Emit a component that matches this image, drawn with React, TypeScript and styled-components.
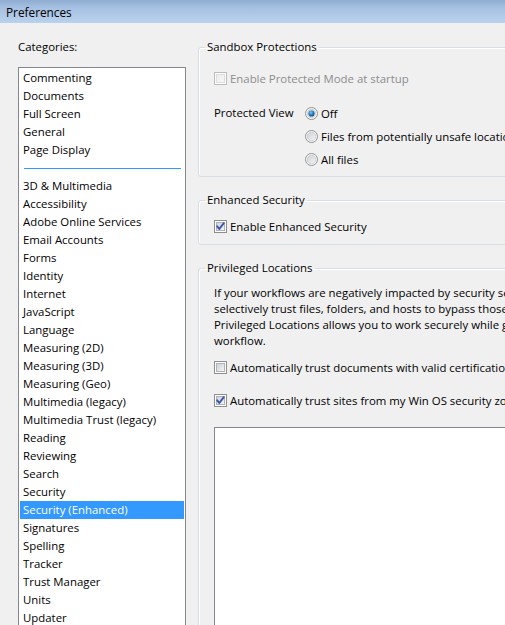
import React from "react";
import styled, {createGlobalStyle} from "styled-components";

const GlobalStyle = createGlobalStyle`
    html, body {
        margin: 0;
        padding: 0;
        background: #f0f0f0;
    }
    body {
        font-family: "Segoe UI", "Open Sans", "Noto Sans", sans-serif;
        font-size: 11.4px;
        color: #000;
    }
`;

const Window = styled.div`
    width: 505px;
    height: 625px;
    overflow: hidden;
    display: flex;
    flex-direction: column;
    background: #f0f0f0;
`;

const TitleBar = styled.div`
    flex: none;
    height: 23px;
    display: flex;
    align-items: center;
    padding-left: 6px;
    font-size: 11.8px;
    background: linear-gradient(to bottom, #8fadd2 0%, #a6c1e2 35%, #b9d2ed 100%);
`;

const Body = styled.div`
    flex: 1;
    min-height: 0;
    display: flex;
    padding: 16px 0 0 18px;
    overflow: hidden;
`;

const LeftColumn = styled.div`
    flex: none;
    width: 168px;
    display: flex;
    flex-direction: column;
    gap: 12px;
`;

const Label = styled.div`
    line-height: 16px;
    height: 16px;
`;

const ListBox = styled.div`
    flex: 1;
    border: 1px solid #828790;
    padding: 1px;
    background: #fff;
`;

const ListItem = styled.div<{ $selected?: boolean }>`
    height: 18px;
    line-height: 18px;
    padding-left: 3px;
    white-space: nowrap;
    background: ${p => p.$selected ? '#3399ff' : 'transparent'};
    color: ${p => p.$selected ? '#fff' : '#000'};
`;

const ListSeparator = styled.div`
    height: 18px;
    display: flex;
    align-items: center;
    padding: 0 3px 0 4px;

    &::after {
        content: "";
        flex: 1;
        height: 1px;
        background: #3399ff;
    }
`;

const RightColumn = styled.div`
    flex: none;
    width: 420px;
    margin-left: 12px;
    display: flex;
    flex-direction: column;
    gap: 15px;
`;

const Group = styled.fieldset<{ $grow?: boolean }>`
    margin: 0;
    padding: 0;
    min-width: 0;
    border: 1px solid #d5dfe5;
    border-radius: 3px;
    box-shadow: inset 1px 1px 0 #fff;
    flex: ${p => p.$grow ? 1 : 'none'};
    ${p => p.$grow ? 'border-bottom: none;' : ''}
`;

const Legend = styled.legend`
    margin-left: 6px;
    padding: 0 2px;
    line-height: 16px;
    height: 16px;
`;

const GroupInner = styled.div<{ $top: number; $bottom: number }>`
    display: flex;
    flex-direction: column;
    padding: ${p => `${p.$top}px 0 ${p.$bottom}px 15px`};
`;

const CheckRow = styled.label<{ $disabled?: boolean; $mt?: number }>`
    display: flex;
    align-items: center;
    gap: 3px;
    height: 18px;
    white-space: nowrap;
    margin-top: ${p => p.$mt ?? 0}px;
    color: ${p => p.$disabled ? '#8d8d8d' : '#000'};
`;

const ViewRow = styled.div`
    display: flex;
    margin-top: 17px;
`;

const ViewLabel = styled.div`
    width: 91px;
    flex: none;
    height: 18px;
    line-height: 18px;
`;

const RadioStack = styled.div`
    display: flex;
    flex-direction: column;
    gap: 5px;
`;

const Paragraph = styled.p`
    margin: 9px 0 0;
    line-height: 16px;
    white-space: nowrap;
`;

const ZoneList = styled.div`
    margin-top: 18px;
    height: 260px;
    border: 1px solid #828790;
    border-right: none;
    background: #fff;
`;

const categoriesTop = ["Commenting", "Documents", "Full Screen", "General", "Page Display"];
const categoriesBottom = [
    "3D & Multimedia", "Accessibility", "Adobe Online Services", "Email Accounts", "Forms",
    "Identity", "Internet", "JavaScript", "Language", "Measuring (2D)", "Measuring (3D)",
    "Measuring (Geo)", "Multimedia (legacy)", "Multimedia Trust (legacy)", "Reading",
    "Reviewing", "Search", "Security", "Security (Enhanced)", "Signatures", "Spelling",
    "Tracker", "Trust Manager", "Units", "Updater",
];
const selected = "Security (Enhanced)";

function CheckBox({checked, disabled}: { checked?: boolean; disabled?: boolean }) {
    const id = disabled ? "cb-dis" : "cb-en";
    return (
        <svg width="13" height="13" viewBox="0 0 13 13" style={{flex: "none"}}>
            <defs>
                <linearGradient id={id} x1="0" y1="0" x2="1" y2="1">
                    <stop offset="0" stopColor={disabled ? "#ececec" : "#cbcfd5"}/>
                    <stop offset="1" stopColor={disabled ? "#f7f7f7" : "#f6f6f6"}/>
                </linearGradient>
            </defs>
            <rect x="0.5" y="0.5" width="12" height="12" fill="#fdfdfd" stroke={disabled ? "#bcbcbc" : "#8e8f8f"}/>
            <rect x="2.5" y="2.5" width="8" height="8" fill={`url(#${id})`} stroke={disabled ? "#dedede" : "#aeb3b9"}/>
            {checked && (
                <path d="M3.2 6.3 L5.3 9 L9.8 3.2" fill="none" stroke="#3a56a8" strokeWidth="1.9"
                      strokeLinecap="round" strokeLinejoin="round"/>
            )}
        </svg>
    );
}

function Radio({checked}: { checked?: boolean }) {
    return (
        <svg width="13" height="13" viewBox="0 0 13 13" style={{flex: "none"}}>
            <defs>
                <linearGradient id="rad-in" x1="0" y1="0" x2="1" y2="1">
                    <stop offset="0" stopColor="#cbcfd5"/>
                    <stop offset="1" stopColor="#f6f6f6"/>
                </linearGradient>
                <radialGradient id="rad-dot" cx="0.4" cy="0.35" r="0.7">
                    <stop offset="0" stopColor="#7cc9f5"/>
                    <stop offset="0.5" stopColor="#2a86c8"/>
                    <stop offset="1" stopColor="#0c3f74"/>
                </radialGradient>
            </defs>
            <circle cx="6.5" cy="6.5" r="6" fill="#fdfdfd" stroke="#8e8f8f"/>
            <circle cx="6.5" cy="6.5" r="4.3" fill="url(#rad-in)" stroke="#b8bcc2" strokeWidth="0.6"/>
            {checked && <circle cx="6.5" cy="6.5" r="3.1" fill="url(#rad-dot)"/>}
        </svg>
    );
}

export default function App() {
    return (
        <Window>
            <GlobalStyle/>
            <TitleBar>Preferences</TitleBar>
            <Body>
                <LeftColumn>
                    <Label>Categories:</Label>
                    <ListBox>
                        {categoriesTop.map(c => <ListItem key={c}>{c}</ListItem>)}
                        <ListSeparator/>
                        {categoriesBottom.map(c => (
                            <ListItem key={c} $selected={c === selected}>{c}</ListItem>
                        ))}
                    </ListBox>
                </LeftColumn>
                <RightColumn>
                    <Group>
                        <Legend>Sandbox Protections</Legend>
                        <GroupInner $top={14} $bottom={8}>
                            <CheckRow $disabled>
                                <CheckBox disabled/>
                                Enable Protected Mode at startup
                            </CheckRow>
                            <ViewRow>
                                <ViewLabel>Protected View</ViewLabel>
                                <RadioStack>
                                    <CheckRow><Radio checked/>Off</CheckRow>
                                    <CheckRow><Radio/>Files from potentially unsafe locations</CheckRow>
                                    <CheckRow><Radio/>All files</CheckRow>
                                </RadioStack>
                            </ViewRow>
                        </GroupInner>
                    </Group>
                    <Group>
                        <Legend>Enhanced Security</Legend>
                        <GroupInner $top={9} $bottom={9}>
                            <CheckRow>
                                <CheckBox checked/>
                                Enable Enhanced Security
                            </CheckRow>
                        </GroupInner>
                    </Group>
                    <Group $grow>
                        <Legend>Privileged Locations</Legend>
                        <GroupInner $top={0} $bottom={0}>
                            <Paragraph>
                                If your workflows are negatively impacted by security settings, use Privileged Locations to<br/>
                                selectively trust files, folders, and hosts to bypass those security restrictions.<br/>
                                Privileged Locations allows you to work securely while granting trust to items in your<br/>
                                workflow.
                            </Paragraph>
                            <CheckRow $mt={9}>
                                <CheckBox/>
                                Automatically trust documents with valid certification
                            </CheckRow>
                            <CheckRow $mt={15}>
                                <CheckBox checked/>
                                Automatically trust sites from my Win OS security zones
                            </CheckRow>
                            <ZoneList/>
                        </GroupInner>
                    </Group>
                </RightColumn>
            </Body>
        </Window>
    );
}
